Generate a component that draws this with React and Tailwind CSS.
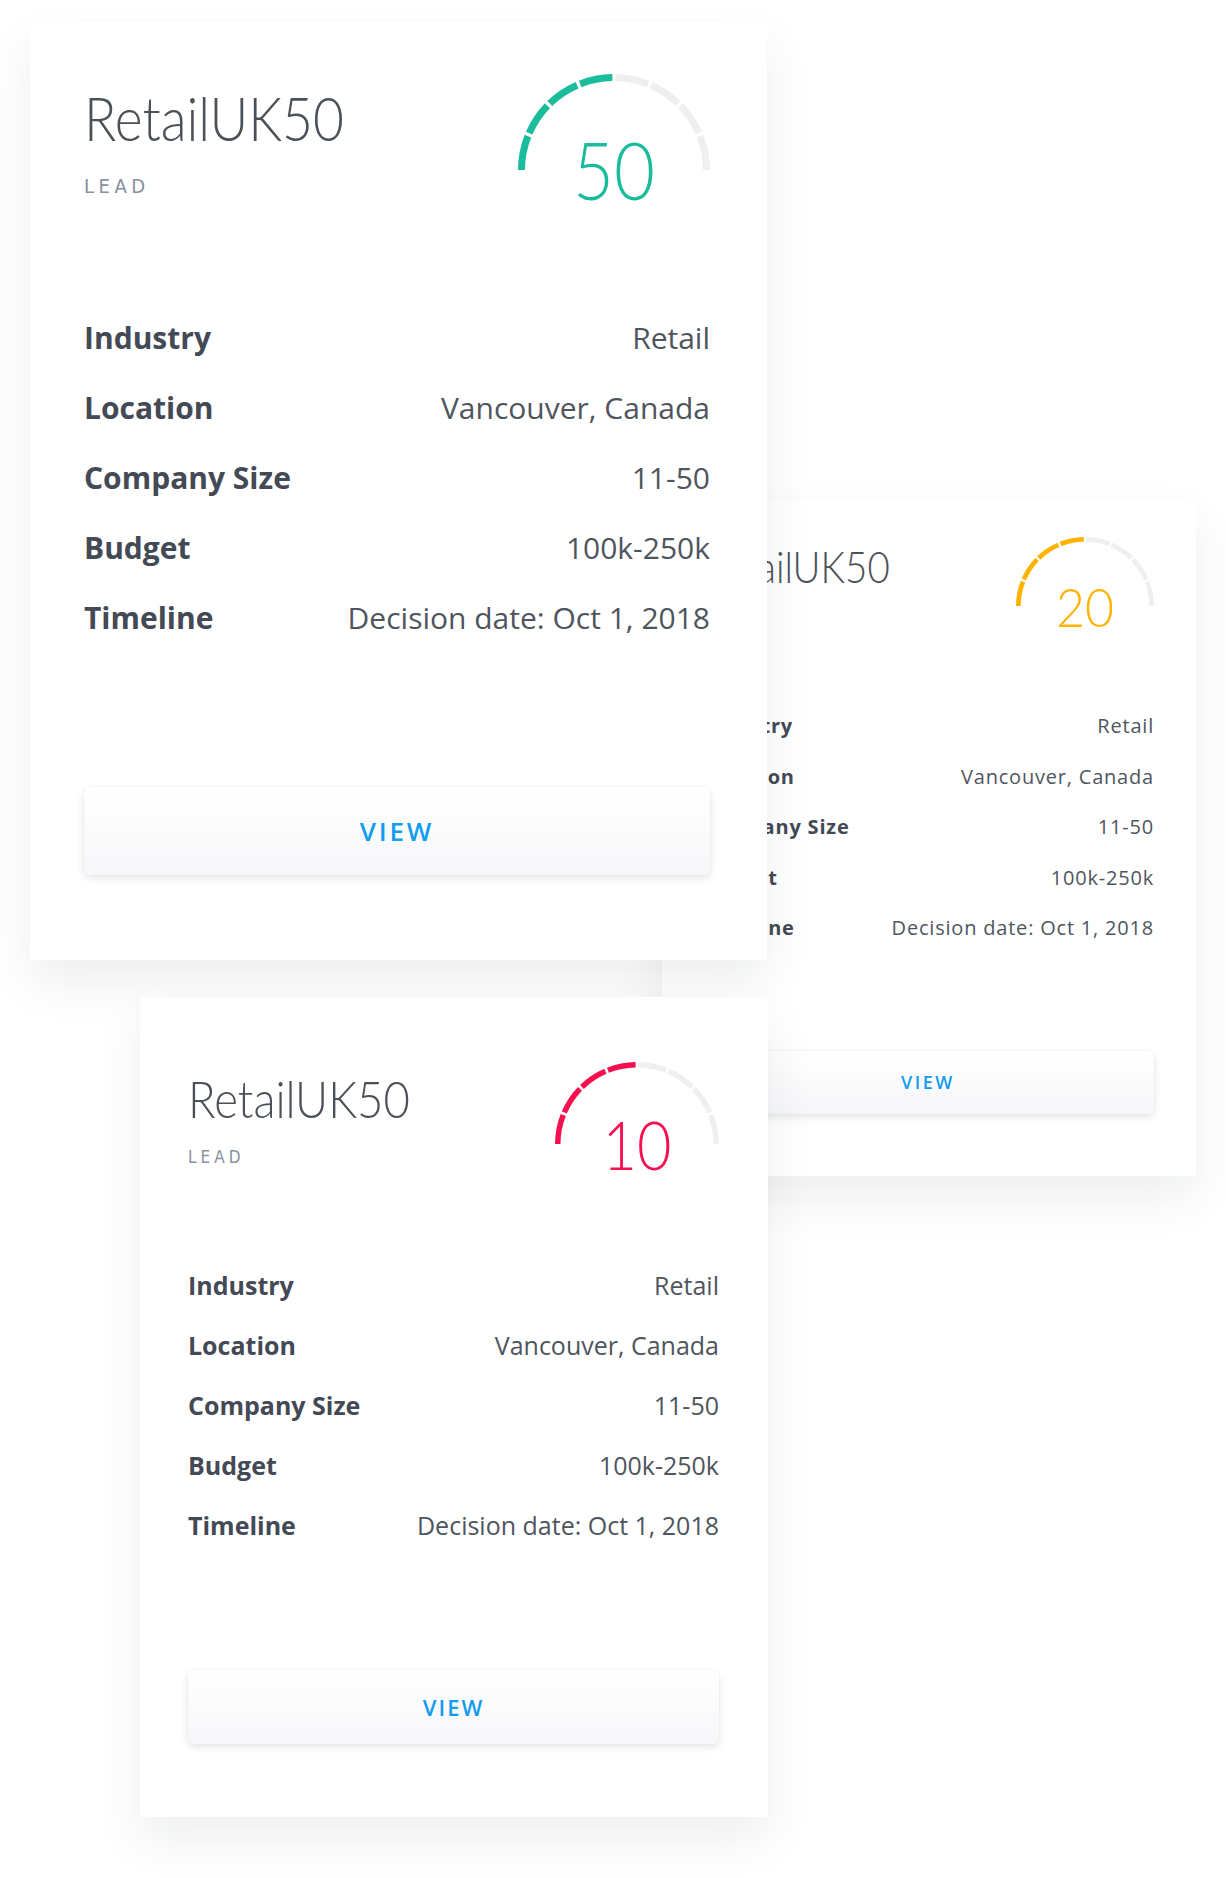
import React from 'react';

const thin = "font-['Lato',Roboto,sans-serif] font-light";
const narrow = "font-['DejaVu_Sans_Condensed','Liberation_Sans',sans-serif]";

const rows = [
  ['Industry', 'Retail'],
  ['Location', 'Vancouver, Canada'],
  ['Company Size', '11-50'],
  ['Budget', '100k-250k'],
  ['Timeline', 'Decision date: Oct 1, 2018'],
];

const sizes = {
  large: {
    box: 'left-[30px] top-[22px] w-[737px] pl-[54px] pr-[57px] pt-[52px] pb-[85px] z-10',
    title: 'mt-[12px] text-[62px]',
    squeeze: 'scale-x-[0.86]',
    lead: 'mt-[28px] text-[20px] tracking-[4.5px]',
    gauge: { d: 192, sw: 7, fs: 80, base: 126, h: 143, tl: 82 },
    rows: 'mt-[86px]',
    row: 'text-[30px] leading-[70px]',
    btn: 'mt-[134px] h-[88px] text-[26px] tracking-[2.8px]',
  },
  small: {
    box: 'left-[662px] top-[500px] w-[534px] pl-[40px] pr-[42px] pt-[37px] pb-[62px] z-0',
    title: 'mt-[7px] text-[44px]',
    squeeze: 'scale-x-[0.875]',
    lead: 'mt-[20px] text-[14px] tracking-[3px]',
    gauge: { d: 138, sw: 4.7, fs: 54, base: 90, h: 102, tl: 58 },
    rows: 'mt-[62px]',
    row: 'text-[20px] leading-[50.5px] tracking-[0.04em]',
    btn: 'mt-[97px] h-[63px] text-[18px] tracking-[2.5px]',
  },
  medium: {
    box: 'left-[140px] top-[997px] w-[628px] pl-[48px] pr-[49px] pt-[65px] pb-[73px] z-10',
    title: 'mt-[10px] text-[52px]',
    squeeze: 'scale-x-[0.875]',
    lead: 'mt-[25px] text-[17px] tracking-[4px]',
    gauge: { d: 164, sw: 5.5, fs: 67, base: 108, h: 122, tl: 69 },
    rows: 'mt-[71px]',
    row: 'text-[25px] leading-[60px]',
    btn: 'mt-[115px] h-[74px] text-[22px] tracking-[2px]',
  },
};

const arc = (c, r, a1, a2) => {
  const rad = (a) => (a * Math.PI) / 180;
  const x1 = c + r * Math.cos(rad(a1));
  const y1 = c - r * Math.sin(rad(a1));
  const x2 = c + r * Math.cos(rad(a2));
  const y2 = c - r * Math.sin(rad(a2));
  return `M ${x1} ${y1} A ${r} ${r} 0 0 1 ${x2} ${y2}`;
};

// 8 segment half-dial, first half filled
const Gauge = ({ d, sw, fs, base, h, tl, color, value }) => {
  const r = d / 2 - sw / 2;
  const c = d / 2;
  const gap = 1;
  const segs = Array.from({ length: 8 }, (_, i) => {
    let a1 = 180 - i * 22.5;
    let a2 = a1 - 22.5;
    if (i > 0) a1 -= gap;
    if (i < 7) a2 += gap;
    return { a1, a2, on: i < 4 };
  });
  return (
    <svg width={d} height={h} viewBox={`0 0 ${d} ${h}`} className="shrink-0 overflow-visible">
      {segs.map((s, i) => (
        <path key={i} d={arc(c, r, s.a1, s.a2)} fill="none" stroke={s.on ? color : '#efefef'} strokeWidth={sw} />
      ))}
      <text
        x={c}
        y={base}
        textAnchor="middle"
        fill={color}
        fontSize={fs}
        textLength={tl}
        lengthAdjust="spacingAndGlyphs"
        className={thin}
      >
        {value}
      </text>
    </svg>
  );
};

const LeadCard = ({ size, color, value }) => {
  const s = sizes[size];
  return (
    <div className={`absolute bg-white shadow-[0_22px_45px_rgba(40,50,70,0.08)] ${s.box}`}>
      <div className="flex items-start justify-between">
        <div>
          <div className={`${thin} leading-none text-[#4b5157] ${s.title}`}>
            <span className={`inline-block origin-left ${s.squeeze}`}>RetailUK50</span>
          </div>
          <div className={`${narrow} leading-none text-[#8891a0] ${s.lead}`}>LEAD</div>
        </div>
        <Gauge {...s.gauge} color={color} value={value} />
      </div>
      <div className={s.rows}>
        {rows.map(([label, val]) => (
          <div key={label} className={`flex justify-between whitespace-nowrap font-['Open_Sans',sans-serif] ${s.row}`}>
            <span className="font-bold text-[#434955]">{label}</span>
            <span className="text-[#4f555e]">{val}</span>
          </div>
        ))}
      </div>
      <button
        className={`flex w-full items-center justify-center rounded-[7px] bg-linear-to-b from-white to-[#f6f7f9] font-['Open_Sans',sans-serif] font-semibold leading-none text-[#129cf0] shadow-[0_3px_8px_rgba(0,0,0,0.11),0_0_2px_rgba(0,0,0,0.05)] ${s.btn}`}
      >
        VIEW
      </button>
    </div>
  );
};

export default function App() {
  return (
    <div className="relative h-[1878px] w-[1226px] overflow-hidden bg-white">
      <LeadCard size="small" color="#ffb300" value="20" />
      <LeadCard size="large" color="#1bbc9b" value="50" />
      <LeadCard size="medium" color="#f5104f" value="10" />
    </div>
  );
}
